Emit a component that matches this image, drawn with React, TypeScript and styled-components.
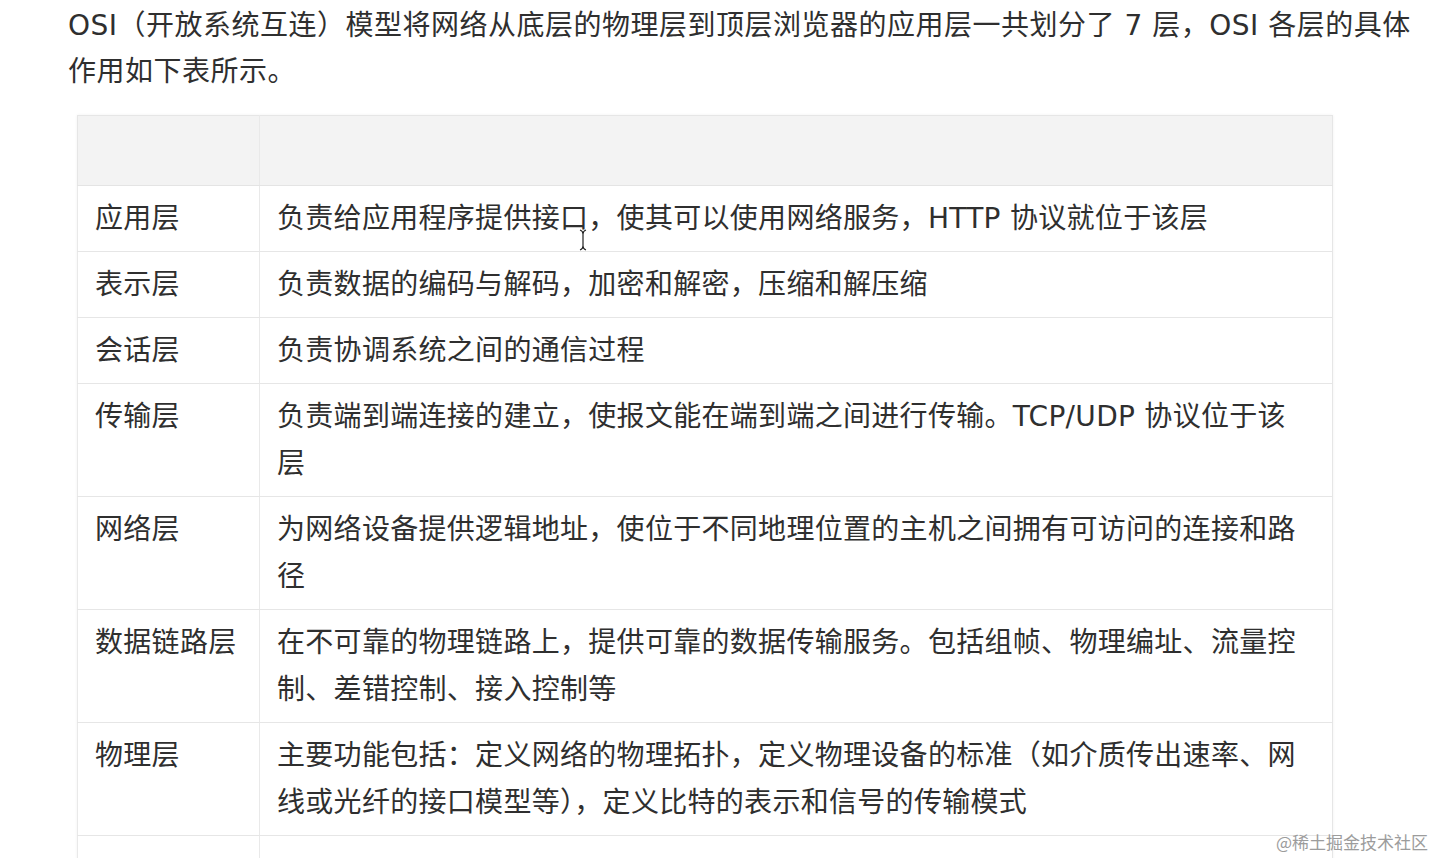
import React from 'react'
import styled, { createGlobalStyle } from 'styled-components'

const GlobalStyle = createGlobalStyle`
  html, body {
    margin: 0;
    padding: 0;
    background: #fff;
  }
  body {
    font-family: "DejaVu Sans", "Noto Sans CJK SC", sans-serif;
    color: #333;
  }
`

type Layer = { name: string; desc: string }

const layers: Layer[] = [
  { name: '应用层', desc: '负责给应用程序提供接口，使其可以使用网络服务，HTTP 协议就位于该层' },
  { name: '表示层', desc: '负责数据的编码与解码，加密和解密，压缩和解压缩' },
  { name: '会话层', desc: '负责协调系统之间的通信过程' },
  { name: '传输层', desc: '负责端到端连接的建立，使报文能在端到端之间进行传输。TCP/UDP 协议位于该层' },
  { name: '网络层', desc: '为网络设备提供逻辑地址，使位于不同地理位置的主机之间拥有可访问的连接和路径' },
  { name: '数据链路层', desc: '在不可靠的物理链路上，提供可靠的数据传输服务。包括组帧、物理编址、流量控制、差错控制、接入控制等' },
  { name: '物理层', desc: '主要功能包括：定义网络的物理拓扑，定义物理设备的标准（如介质传出速率、网线或光纤的接口模型等），定义比特的表示和信号的传输模式' },
]

const App: React.FC = () => {
  return (
    <>
      <GlobalStyle />
      <Page>
        <Intro>
          OSI（开放系统互连）模型将网络从底层的物理层到顶层浏览器的应用层一共划分了 7 层，OSI 各层的具体作用如下表所示。
        </Intro>
        <TableWrap>
          <Table>
            <thead>
              <tr>
                <HeadCell $first />
                <HeadCell />
              </tr>
            </thead>
            <tbody>
              {layers.map((l) => (
                <tr key={l.name}>
                  <Cell $first>{l.name}</Cell>
                  <Cell>{l.desc}</Cell>
                </tr>
              ))}
              <tr>
                <Cell $first>&nbsp;</Cell>
                <Cell>&nbsp;</Cell>
              </tr>
            </tbody>
          </Table>
          <Cursor viewBox="0 0 8 22" aria-hidden="true">
            <path d="M1 1 Q4 2 4 5 L4 17 Q4 20 1 21 M7 1 Q4 2 4 5 M4 17 Q4 20 7 21" fill="none" stroke="#222" strokeWidth="1.2" />
          </Cursor>
        </TableWrap>
        <Watermark>@稀土掘金技术社区</Watermark>
      </Page>
    </>
  )
}

export default App

const Page = styled.div`
  position: relative;
  width: 1436px;
  height: 858px;
  overflow: hidden;
  padding: 3px 0 0 68px;
  box-sizing: border-box;
`

const Intro = styled.p`
  margin: 0;
  max-width: 1352px;
  font-size: 28px;
  line-height: 46px;
  letter-spacing: 0.5px;
  color: #2f2f2f;
`

const TableWrap = styled.div`
  position: relative;
  margin: 20px 0 0 9px;
  width: 1256px;
`

const Table = styled.table`
  width: 1256px;
  border-collapse: collapse;
  table-layout: fixed;
  border: 1px solid #e6e6e6;
  box-shadow: 0 0 3px rgba(0, 0, 0, 0.06);
`

const HeadCell = styled.th<{ $first?: boolean }>`
  width: ${(p) => (p.$first ? '181px' : 'auto')};
  height: 69px;
  padding: 0;
  background: #f3f3f3;
  border-left: 1px solid ${(p) => (p.$first ? '#e6e6e6' : '#e9e9e9')};
  border-bottom: 1px solid #e4e4e4;
`

const Cell = styled.td<{ $first?: boolean }>`
  width: ${(p) => (p.$first ? '181px' : 'auto')};
  padding: 9px 18px 9px 17px;
  vertical-align: top;
  font-size: 28px;
  line-height: 47px;
  letter-spacing: 0.3px;
  color: #2f2f2f;
  border-left: 1px solid #e9e9e9;
  border-bottom: 1px solid #e6e6e6;
  white-space: ${(p) => (p.$first ? 'nowrap' : 'normal')};
`

const Cursor = styled.svg`
  position: absolute;
  left: 502px;
  top: 114px;
  width: 8px;
  height: 22px;
`

const Watermark = styled.div`
  position: absolute;
  right: 8px;
  bottom: 6px;
  font-size: 17px;
  line-height: 20px;
  color: #9c9c9c;
  font-family: "Noto Sans CJK SC", sans-serif;
`
